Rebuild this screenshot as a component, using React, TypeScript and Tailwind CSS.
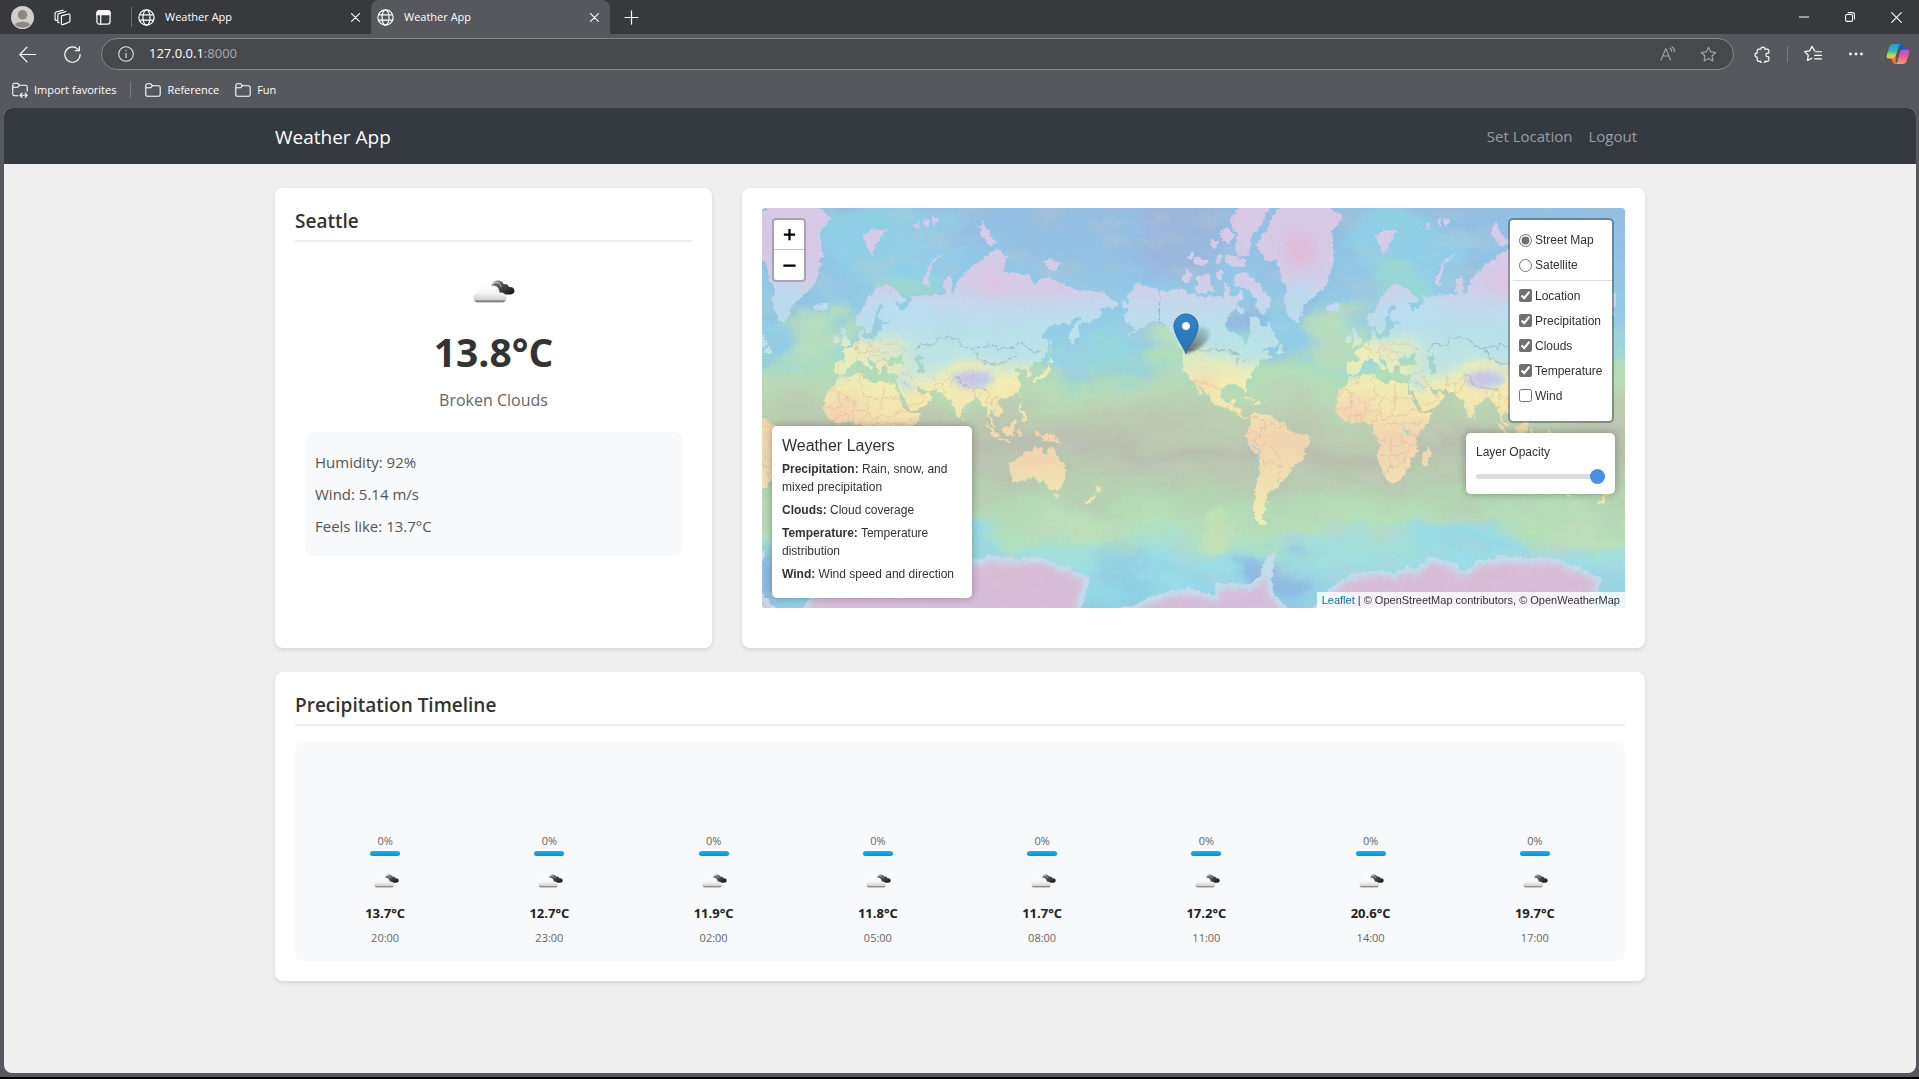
import React, { useState } from "react";

/* ---------- map geometry ---------- */

const WORLD = 512;
const TOP = 34;

function project(lon: number, lat: number) {
  const x = ((lon + 180) / 360) * WORLD;
  const r = (lat * Math.PI) / 180;
  const y = WORLD / 2 - (WORLD / (2 * Math.PI)) * Math.log(Math.tan(Math.PI / 4 + r / 2)) - TOP;
  return `${x.toFixed(1)} ${y.toFixed(1)}`;
}

function toPath(coords: string, close = true) {
  const n = coords.trim().split(/\s+/).map(Number);
  const pts: string[] = [];
  for (let i = 0; i < n.length; i += 2) pts.push(project(n[i], n[i + 1]));
  return "M" + pts.join("L") + (close ? "Z" : "");
}

const ANTARCTICA = toPath(
  "-180 -79 -180 -77.5 -160 -76.8 -148 -75.5 -135 -74.3 -120 -73.7 -112 -74.3 -102 -75 -101 -72.5 -90 -72.8 -78 -73 -70 -71 -67 -67.5 -58 -63.5 -60 -66 -62 -71 -61 -74.5 -50 -77.5 -35 -78 -26 -75 -16 -72.5 -8 -71 5 -70 15 -69.7 24 -70.3 33 -68.8 39 -69.7 45 -67.6 51 -66 57 -67 62 -67.5 68 -68 71 -70 76 -69.5 82 -67.3 88 -66.7 94 -66.9 100 -65.5 107 -66.6 112 -66 119 -67 125 -66.2 131 -66.2 137 -66.7 142 -67 148 -68.5 154 -68.8 160 -70 165 -70.7 170 -71.5 168 -74 163 -77.5 180 -79 180 -82 -180 -82"
);

const COASTS = [
  // North and Central America
  "-168 66 -162 66.5 -164 68 -157 71.3 -150 70.5 -141 69.7 -135 69 -128 70 -124 69.5 -115 68.2 -108 68 -102 67.8 -96 68 -95 71.5 -92 70.5 -91 68.5 -86 68 -85 69.5 -82 69.5 -82 67 -86 66.3 -90 64 -94 61 -94.5 58.8 -92.5 57 -85 55.3 -82.3 55 -82 53 -80 51.2 -79 52 -79 54.5 -76.5 56.5 -78 59 -77.5 62.3 -73.5 62.3 -70 61 -69.5 59 -67 58.5 -64.5 60.3 -62 57.5 -60 55 -56 52.5 -60 50.2 -66 50 -70 47 -65 48.8 -65 46.5 -61 46 -64 44.5 -66 44.5 -70 43.6 -70.6 41.7 -74 40.6 -76 37 -76 35 -81 31.5 -80.2 27 -80.6 25.2 -82.7 28 -84 30 -89.5 30.2 -94 29.5 -97.3 27.5 -97.7 22.5 -95.5 18.8 -91.5 18.6 -90.3 21 -87 21.4 -88.3 17.5 -88.5 15.9 -83.4 15 -83.7 11 -81.5 9 -77.5 8.6 -79.5 7.5 -83 8.3 -85.7 10 -87.5 13 -92 14.3 -95 16 -101.5 17.6 -105.5 20.3 -106 23 -109.5 26.5 -112.5 29.8 -114.7 31.6 -112.5 27.5 -110 23.2 -112 24.8 -115 28.5 -117.2 32.6 -120.6 34.6 -124 39 -124.3 43 -124.5 48 -127.5 51 -131 54.8 -135 58.5 -140 59.8 -146 60.8 -151 59.3 -154 58 -160 55.7 -164 54.7 -158 58 -162 58.8 -165.5 61 -164.5 63.3 -161.5 64.4 -166 64.5",
  // Newfoundland
  "-59 47.7 -56 51.5 -53 47",
  // Arctic islands
  "-117 72.5 -112 73 -106 73.3 -105 71 -103 69.5 -108 68.8 -115 69 -117 70.5 -113 71.3",
  "-125 72.5 -122 74.3 -118 73 -120 71.2 -124 71.3",
  "-80 73.7 -74 71.7 -68 70 -62 67 -64 65 -68 62.5 -73 64.3 -72.5 67.3 -79 70 -88 70.5 -89 73",
  "-92 81.3 -85 82.4 -75 83 -64 82.7 -68 81 -76 79.5 -78 76.6 -86 76.4 -88 78 -86 80 -90 80.4",
  "-95 76.5 -90 76.6 -81 75.8 -80 74.6 -90 74.7 -95 75.6",
  "-117 76.4 -110 76 -106 75.8 -109 75 -116 75",
  "-101 73.8 -97 73.8 -97 71.8 -101 72.5",
  "-98 79.8 -94 80.5 -88 79.5 -92 78.4 -97 78.8",
  "-105 79 -100 78.8 -101 77.8 -105 78",
  "-100 76.6 -97 76.5 -98 75.2 -103 75.5",
  "-87 65.7 -81 64 -83 62.7 -87 63.8",
  "-122 76 -118 77.3 -116 77 -119 75.7",
  // Greenland
  "-73 78.3 -67 76 -58 75.6 -55 72 -51 69.5 -53.5 67 -52 64 -48.5 61 -44 59.9 -42 62 -39.5 65.5 -32 68 -24 70.5 -20 74 -18 77 -20 80 -12 81.5 -22 82.7 -35 84 -55 83 -64 81 -66 80",
  // Europe and Asia
  "-9 43.3 -1.8 43.4 -1.2 46 -4.6 48.4 1.5 50.2 4.5 52.5 8 53.8 8.2 57 10.5 57.5 10 54.5 14 54 19 54.4 21.5 57.3 24 57.5 24 59.3 30 59.9 25 60.4 21.5 60.8 21.5 63.2 25.3 65 22 65.7 17.5 61 18.5 59.8 16 56.5 13 55.5 11 59 8 58.2 5.2 60 5.3 62 10 64 14 67.5 20 70 26 71 31 70.3 41 67.4 40 66.2 33 66.5 37 64 40 64.7 44 66 44 68.5 47 67.8 54 68.5 60 68.5 68 68.5 67 72 72 73 74 68 78 72 87 74.8 95 76 104 77.7 112 76.5 108 73.5 114 73.6 127 73 131 71 140 72.5 152 71 161 69.6 170 69.5 180 69 180 65 177.5 64.5 179 62.5 170 60 164 60 162.5 57.5 162.8 55.5 159.5 53 156.8 51 155.7 56 159 59 164 62.3 160 61.5 155 59.5 148 59.5 142 59 135.5 54.7 141 53 140.5 48.5 135.5 44 131.5 43 128 40 129.3 36.5 126.5 34.5 126 37.5 124.7 39.6 121.5 39 121 40.7 117.8 39 119 37.3 122.3 37 119.5 35 121.8 31 121 28 117 23.8 111 21.4 108 21.7 106 19 109 13.5 107 10.4 105 8.7 104.8 10.4 100.8 13.4 99.3 10 103.4 3.5 103.5 1.4 100.4 5.5 98.3 9 97.5 16.5 94.4 16 91.8 22.3 88 21.6 82.3 16.8 80.2 15 79.8 10.4 77.5 8.1 74.8 13 72.8 19.5 72.5 21 69 22.3 66.5 25.3 57 27 51.3 28 48 30 50.5 26 51.5 24.5 54 24.2 56.3 26.2 59.8 22.5 55 17.2 45 12.8 43 14 42.5 17 39 21.5 35 28 34.6 29.5 34.3 31.3 36 36.2 28 36.7 26.5 40 29 41.2 35 42 41 41.2 38 44.5 39 47.2 35 46.3 33.5 44.5 31 46.6 28 43.5 28 41.3 23.5 40.5 24 38 22.5 36.5 19.5 40 19.6 42 13.5 45.6 13.8 43 18.4 40 16 38 13.5 41 10.3 43.5 8.8 44.4 3.2 43.2 -0.2 39 -2 36.8 -5.6 36 -9 37 -9.4 39",
  // Chukotka across the antimeridian
  "-180 69 -175 67.3 -170 66.2 -173 64.3 -180 65",
  // Africa
  "-6 35.8 -1.5 35.2 10 37.3 10.8 34 15.2 32.3 20 31 22 33 29 31 32.5 31.2 34 27.5 37.3 21 39.5 15.5 43.2 11.7 51.2 12 47.8 4.5 41.5 -1.8 39 -6.5 40.7 -15 35 -20 35.5 -24 32.7 -26.5 30 -31.5 25.5 -34 20 -34.8 18.2 -32 15 -27 14.3 -22 11.8 -17 13.7 -11 12 -5.5 8.8 -1 9.6 4 6 4.3 2 6.3 -4 5.2 -7.7 4.4 -13 8 -16.8 12.5 -17.3 15 -16.2 19 -17 21.2 -13 27.5 -9.7 30",
  "49.3 -12 50.3 -16 47 -25 44 -25 43.5 -21.5 44.5 -16.3",
  // South America
  "-77.3 8.5 -74.8 11 -71.5 12.3 -68 10.6 -62 10.6 -57 6 -51.7 4 -50 0 -44 -2.6 -39 -3 -35.3 -5.5 -35 -9 -39 -13.5 -39.3 -18 -41 -22 -45 -23.5 -48.6 -26 -48.7 -28.5 -53.5 -33.8 -57 -35 -57 -38 -62 -39 -65 -41 -65.4 -45 -67.5 -46.5 -65.8 -48 -69 -51 -68.3 -53 -65.2 -54.7 -69 -55.4 -73 -53 -75.5 -49 -73.5 -42 -73.5 -37 -71.5 -32 -70.3 -24 -70.3 -18.3 -76.2 -14 -79 -8 -81.3 -5 -80 -2.5 -79.5 1 -77.3 4",
  // Australia and Tasmania
  "114 -22 117 -20.7 122 -18 126 -14 129.5 -15 131 -12 136.8 -12.2 135.5 -15 140 -17.6 142 -11 145.4 -15 149 -20.3 153 -25.5 153 -31 150 -37.3 146.3 -39 140.5 -38 138 -34.5 137.5 -33 135.5 -34.8 131 -31.5 126 -32.3 120 -34 115.2 -34.3 115.7 -31.5 113.5 -26",
  "144.8 -40.8 148.2 -41 147 -43.5",
  // New Zealand
  "172.8 -34.6 175.5 -37 178.4 -37.8 175.3 -41.5 174.8 -39.5 174.8 -37.5",
  "172.8 -40.6 174 -41.8 170.5 -46 168 -46.6 167 -45.5",
  // New Guinea, Borneo, Sumatra, Java, Sulawesi, Philippines
  "131 -0.8 134 -0.9 135 -3.3 141 -2.6 147 -6 150.5 -10.5 144 -7.8 138 -8.3 138 -5.5 133 -4",
  "109 1.5 113 3 117 7 119 5 117.5 1 116 -4 110.3 -3",
  "95.5 5.5 98.5 4 103.5 -1 106 -3.5 105.5 -5.8 102 -4 98.5 1.5",
  "105.5 -6.5 110 -6.6 115 -8.2 114 -8.8 106 -7.5",
  "119.5 0.5 124.5 1.2 121 .2 123 -4.5 121 -3 119.6 -5.5",
  "120.5 18.5 122.2 18.3 121.5 14 124 12.8 126 9 126 6.5 122 7.2 123 10 120.3 14.5",
  // Japan and Sakhalin
  "130 33.5 132.5 35.5 136.8 37.2 140 39.5 141 41.3 142 39.5 140.7 35.8 136.5 34 131 31.3",
  "140 41.7 141.8 45.4 145.3 43.4 143 42",
  "142 54 143.3 52.8 143 49 142.6 46.3 142 48.5",
  // Britain, Ireland, Iceland
  "-5.5 50 1.2 51.2 1.6 52.8 -1.5 55 -2 57.5 -4 58.6 -6 57 -3.2 54.8 -4.5 53 -4.8 51.7",
  "-10 52 -6.4 52.2 -6 54.6 -8 55.3 -10 54",
  "-24 65.5 -20.5 66 -15 66.2 -14 64.8 -18.8 63.4 -22.7 64",
  // Svalbard, Novaya Zemlya, Franz Josef, Severnaya Zemlya, New Siberian
  "11 79.6 18 80.2 27 80.2 21 78.8 17 76.6 13.5 78",
  "52 71 55 73.5 60 76 68.5 77 60 75.3 56 72 57.3 70.7",
  "45 80.7 50 81 49 80.2", "53 81.2 57 81.4 56 80.5", "59 81.6 64 81.4 60 80.6",
  "92 79.7 95 81.2 100 79.5 105 78.6 100 78",
  "137 75.5 142 76.2 150 75.2 143 73.5",
  // Cuba, Hispaniola, Sri Lanka, Taiwan
  "-84.8 22 -81 23.1 -74.3 20.2 -77.5 19.9 -82 22.3",
  "-74.3 18.5 -71.8 19.8 -68.5 18.6 -71.5 17.8",
  "79.8 8 80.3 9.7 81.8 7 80.3 6",
  "120.2 23 121.6 25.2 120.9 22",
].map((c) => toPath(c)).join("") + ANTARCTICA;

const LAKES = [
  "47 45.5 51 47 53 45 51 43 53.5 41 54 37 50 37 49 40.5",
  "-92 46.7 -88 48.8 -84.5 46.7 -88 46.5",
  "-87.7 42 -86.3 42 -85.5 45.8 -87.5 45",
  "-83.5 43.5 -80 45.5 -81.5 43.3",
  "-83 41.8 -79 42.8 -81 42.5",
  "31.7 -1 34 0 34 -2 32 -2.6",
].map((c) => toPath(c)).join("");

const DARK_BORDERS = [
  "-141 69.7 -141 60.3 -136 59",
  "-123 49 -95 49 -89 48 -83 46",
  "47 48.5 51 51.5 61 51 62 54 71 54.3 77 53.7 80 51 87 49.2 92 50.6 98 50 98 52 103 50.5 108 49.5 115 50 117 49.7 120 53 127 50 131 47.7 135 48.4",
  "87 49.2 90 47.5 91 45 97 42.7 105 41.7 111 43.5 119 46.7",
  "73 36.8 78 34 79 31 81 30 88 28 92 27.8 97 28",
].map((c) => toPath(c, false)).join("");

const RED_BORDERS = [
  "-13 27.6 -8.7 27.3 -8.7 26 -4.8 25 3.2 19 5.8 19.5 12 23.5 15 23 24 19.5 24 22 25 22 25 31.5",
  "25 22 37 22", "24 19.5 24 15.5 22 13 23 10 27 9.5 33 10 34 12 36.5 14.5 43 12.5", "-8.7 27.3 -13 26 -17 21.3",
  "9.5 37 8 33.5 9.8 30 9.5 26.5 12 23.5", "-1.7 35 -1 32 -8.7 28.7 -8.7 27.3", "-12 15 -5.5 15.5 -6.5 25",
  "-12 15 -16.5 16.3", "4 13.5 4.2 16.5 3.2 19", "4 13.5 13 13.7 14 16 15 23", "2.7 6.3 3.5 11.7 4 13.5", "8.5 4.8 14 12 13.5 13.7",
  "-3 5 -2.8 11 0 11 1 6", "-8 4.5 -8 10 -5 10 -3 10", "14.5 13 15.5 8 18 8 23 10", "16 2 18.5 4.5 27.5 5 30 4 35 5 42 4 45 8 48 8",
  "30 4 31 1 29.5 -1 29 -4.5 30.5 -8 28 -9 28.5 -12 24 -11 22 -11 22 -7 17 -8 12 -6", "34 1 34 -1 39 -5", "30.5 -8 34 -10 40 -10.7",
  "22 -11 22 -16 23.5 -18 12 -17.2", "25 -18 30 -15.7 34.5 -14.5 34.5 -10", "21 -18 21 -22 20 -28.5 17 -28.8", "20 -25 25 -25.7 29 -22 32 -22 33 -16", "25 -18 29 -22", "32 -22 32 -27",
  "-117 32.5 -111 31.3 -106.5 31.7 -103 29 -99.5 27.5 -97.3 26", "-92 14.6 -91 17.8 -89 17.8", "-88 15.7 -90 13.8", "-83.6 11 -86 11.2", "-86 15 -83.5 15",
  "-67 6 -67 1.2 -70 2 -70 -4.2 -74 -7.5 -73 -9.5 -70.5 -11 -65 -10 -60 -14 -58 -17 -58 -20 -54.5 -22.5 -54 -25.5 -56 -28 -57.6 -30.2 -53.5 -33.7",
  "-77.5 8 -72.5 9 -72 7 -67 6", "-79 1.3 -75.2 -.2 -70 -4.2", "-60.7 5.2 -64 4 -67 1.2", "-60 8.3 -60 2 -56.5 2 -51.8 4", "-80.3 -3.4 -75.5 -1.5", "-57 6 -56.5 2",
  "-69.5 -17.5 -70.5 -11", "-58 -20 -62.5 -22 -67 -22.8 -69.5 -17.5", "-62.5 -22 -57.6 -25.3 -54.5 -25.6", "-57.6 -30.2 -58.2 -34",
  "35.5 33 39 32 44.8 29.3 48 29.5", "36 36.5 42.3 37.2 44.8 39.7", "42.3 37.2 46 33 48 30.5", "43 17.3 52 19 55 22.5 51.5 24.2", "61 36.5 61 31 61.5 25.2", "61 31 66.5 30 71 34 74 37", "66.5 30 68 24", "74 34 71 28 69 24.5", "88 27 89.5 22", "92.5 22 94 26 97 28 98.5 24 101 21.5 106 22.8 108 21.6", "98.5 24 97.5 19 98.5 15", "101 21 101 18 105 16 103 14.3 102.7 12", "102 22 105 19 107.5 15",
  "24 38 26.5 41.5 28 42", "2.5 51 6 49.5 8 49 7.5 47.5 6 46 7.5 43.7", "6.5 53 6 51 6 49.5", "14.3 54 14.8 51 18.5 49.8 22.5 49", "7.5 47.5 13 47.6 13 49 14.8 51", "13.5 46 16.5 46.5 19 46 22 48 26.5 48 30 46", "13 47.6 17 48.5 22 48.4", "24 54 23.5 51.5 31 51.5 34 52 40 49.5 38.3 47.2", "19 42 20.5 44 22.5 44.5 28.5 44", "-7 42 -6.8 41 -7.3 37.5", "141 -2.6 141 -9",
].map((c) => toPath(c, false)).join("");

function WorldMap() {
  const offsets = [-682, -170, 342];
  return (
    <svg className="absolute inset-0 h-full w-full" viewBox="0 0 863 400" preserveAspectRatio="xMidYMid slice" aria-hidden="true">
      <defs>
        <linearGradient id="sea" x1="0" y1="-40" x2="0" y2="440" gradientUnits="userSpaceOnUse">
          <stop offset="0" stopColor="#93bde3" />
          <stop offset=".18" stopColor="#93c3e5" />
          <stop offset=".32" stopColor="#94cee6" />
          <stop offset=".38" stopColor="#9dd8dd" />
          <stop offset=".42" stopColor="#b0deba" />
          <stop offset=".47" stopColor="#b8dab5" />
          <stop offset=".53" stopColor="#bcccb0" />
          <stop offset=".59" stopColor="#b9bfae" />
          <stop offset=".64" stopColor="#b8c9af" />
          <stop offset=".69" stopColor="#b4d8b3" />
          <stop offset=".75" stopColor="#b5e0b8" />
          <stop offset=".79" stopColor="#a5dfd6" />
          <stop offset=".84" stopColor="#9bdde8" />
          <stop offset=".91" stopColor="#93d4e6" />
          <stop offset="1" stopColor="#8cc4e3" />
        </linearGradient>
        <linearGradient id="soil" x1="0" y1="0" x2="0" y2="400" gradientUnits="userSpaceOnUse">
          <stop offset="0" stopColor="#d8c8e6" />
          <stop offset=".19" stopColor="#d2cee9" />
          <stop offset=".25" stopColor="#c2daee" />
          <stop offset=".3" stopColor="#b8e1eb" />
          <stop offset=".35" stopColor="#bce3e6" />
          <stop offset=".39" stopColor="#e5edbd" />
          <stop offset=".44" stopColor="#f2edb4" />
          <stop offset=".52" stopColor="#f3e4b0" />
          <stop offset=".57" stopColor="#f1d4b0" />
          <stop offset=".63" stopColor="#f1dab0" />
          <stop offset=".7" stopColor="#f1e2b0" />
          <stop offset=".8" stopColor="#eeeeb4" />
          <stop offset=".86" stopColor="#d8bfdb" />
          <stop offset=".92" stopColor="#dabcd7" />
          <stop offset="1" stopColor="#d7bdda" />
        </linearGradient>
        <clipPath id="coast">
          <path d={COASTS} />
        </clipPath>
        <filter id="soft" x="-50%" y="-50%" width="200%" height="200%">
          <feGaussianBlur stdDeviation="7" />
        </filter>
        <filter id="smear" x="-50%" y="-50%" width="200%" height="200%">
          <feGaussianBlur stdDeviation="3" />
        </filter>
        <filter id="swirl" filterUnits="userSpaceOnUse" x="-40" y="-40" width="943" height="480">
          <feTurbulence type="fractalNoise" baseFrequency=".011 .02" numOctaves="6" seed="8" result="n" />
          <feDisplacementMap in="SourceGraphic" in2="n" scale="72" xChannelSelector="R" yChannelSelector="G" />
        </filter>
        <filter id="rough" filterUnits="userSpaceOnUse" x="-10" y="-10" width="883" height="420">
          <feTurbulence type="fractalNoise" baseFrequency=".2" numOctaves="3" seed="3" result="n" />
          <feDisplacementMap in="SourceGraphic" in2="n" scale="6" xChannelSelector="R" yChannelSelector="G" />
        </filter>
        <filter id="cloud" filterUnits="userSpaceOnUse" x="0" y="0" width="863" height="400">
          <feTurbulence type="fractalNoise" baseFrequency=".022 .045" numOctaves="7" seed="21" />
          <feColorMatrix values="0 0 0 0 .6  0 0 0 0 .6  0 0 0 0 .6  1.9 0 0 0 -.9" />
        </filter>
        <g id="sea-patches" filter="url(#soft)">
          <ellipse cx="70" cy="18" rx="52" ry="46" fill="#9db2dc" opacity=".7" />
          <ellipse cx="200" cy="60" rx="16" ry="60" fill="#8bbde4" opacity=".7" />
          <ellipse cx="290" cy="35" rx="60" ry="38" fill="#8fd0e6" opacity=".9" />
          <ellipse cx="305" cy="75" rx="30" ry="18" fill="#9adbd0" opacity=".8" />
          <ellipse cx="350" cy="40" rx="22" ry="40" fill="#93cde7" opacity=".8" />
          <ellipse cx="224" cy="130" rx="28" ry="22" fill="#b5debb" />
          <ellipse cx="250" cy="114" rx="26" ry="8" fill="#b9dfb6" />
          <ellipse cx="180" cy="140" rx="22" ry="16" fill="#91cbe6" />
          <ellipse cx="83" cy="138" rx="28" ry="20" fill="#b5dfbc" />
          <ellipse cx="6" cy="138" rx="18" ry="20" fill="#93d6da" />
          <ellipse cx="475" cy="150" rx="22" ry="14" fill="#93d3e4" />
          <ellipse cx="40" cy="140" rx="20" ry="18" fill="#92cfe6" />
          <ellipse cx="135" cy="118" rx="22" ry="20" fill="#8cbbe2" />
          <ellipse cx="172" cy="372" rx="32" ry="26" fill="#8cbbe3" />
          <ellipse cx="115" cy="322" rx="24" ry="18" fill="#c2e2b5" />
          <ellipse cx="20" cy="370" rx="10" ry="38" fill="#8bcfe2" />
          <ellipse cx="490" cy="315" rx="40" ry="14" fill="#bde0b9" />
          <ellipse cx="360" cy="335" rx="60" ry="20" fill="#98dae6" />
        </g>
        <g id="world">
          <g clipPath="url(#coast)">
            <rect x="0" y="-10" width="512" height="430" fill="url(#soil)" />
            <g filter="url(#soft)">
              <ellipse cx="196" cy="42" rx="16" ry="18" fill="#e2b8d3" opacity=".8" />
              <ellipse cx="195" cy="93" rx="16" ry="18" fill="#b9dbf0" />
              <ellipse cx="402" cy="76" rx="20" ry="14" fill="#dfc1df" opacity=".7" />
              <ellipse cx="455" cy="80" rx="34" ry="9" fill="#dbc6e4" opacity=".7" />
              <ellipse cx="310" cy="105" rx="30" ry="14" fill="#b8dff0" />
              <ellipse cx="262" cy="144" rx="30" ry="12" fill="#f0ecb8" />
              <ellipse cx="300" cy="138" rx="16" ry="7" fill="#eaedbc" />
              <ellipse cx="345" cy="148" rx="28" ry="11" fill="#b9e4e6" />
              <ellipse cx="415" cy="146" rx="45" ry="12" fill="#b9e2ea" />
              <ellipse cx="325" cy="162" rx="22" ry="8" fill="#c4e4de" />
              <ellipse cx="150" cy="146" rx="22" ry="9" fill="#b9e3e8" />
              <ellipse cx="90" cy="148" rx="14" ry="9" fill="#e2ecb8" />
              <ellipse cx="100" cy="176" rx="12" ry="8" fill="#f4d6b0" />
              <ellipse cx="250" cy="195" rx="22" ry="5" fill="#f3d2b3" transform="rotate(-30 250 195)" />
              <ellipse cx="250" cy="207" rx="26" ry="5" fill="#f3ccae" />
              <ellipse cx="447" cy="250" rx="20" ry="10" fill="#f4d3ae" />
            </g>
            <g filter="url(#smear)">
              <ellipse cx="381" cy="171" rx="20" ry="9" fill="#c0cbea" />
              <ellipse cx="376" cy="171" rx="8" ry="4" fill="#d3bfe2" />
              <ellipse cx="376" cy="158" rx="18" ry="4" fill="#eeecb4" />
              <ellipse cx="312" cy="176" rx="12" ry="4" fill="#b9e1ea" transform="rotate(35 312 176)" />
              <ellipse cx="243" cy="171" rx="12" ry="3" fill="#c6e4e0" transform="rotate(-18 243 171)" />
              <path d={ANTARCTICA} fill="none" stroke="#bfe0f0" strokeWidth="10" />
            </g>
            <path d={LAKES} fill="#a6d6cc" />
          </g>
          <path d={RED_BORDERS} fill="none" stroke="#cf958a" strokeWidth=".6" opacity=".5" />
          <path d={DARK_BORDERS} fill="none" stroke="#7d86a4" strokeWidth=".7" opacity=".6" />
          <path d="M148 237 Q157 243 155 252 Q150 262 151 278" fill="none" stroke="#9fcfe6" strokeWidth="1.200" />
        </g>
      </defs>
      <g filter="url(#swirl)">
        <rect x="-60" y="-60" width="983" height="520" fill="url(#sea)" />
        {offsets.map((x) => (
          <use key={x} href="#sea-patches" x={x} />
        ))}
      </g>
      <rect width="863" height="400" filter="url(#cloud)" opacity=".34" />
      <g filter="url(#rough)">
        {offsets.map((x) => (
          <use key={x} href="#world" x={x} />
        ))}
      </g>
      <rect width="863" height="400" filter="url(#cloud)" opacity=".1" />
    </svg>
  );
}

function Marker() {
  return (
    <svg className="absolute top-[105px] left-[49%] h-[42px] w-[50px] -translate-x-3" viewBox="0 0 50 42" role="img" aria-label="Seattle marker">
      <defs>
        <linearGradient id="pin" x1="0" y1="0" x2="0" y2="1">
          <stop offset="0" stopColor="#2e86cc" />
          <stop offset="1" stopColor="#2f6faf" />
        </linearGradient>
        <linearGradient id="pin-shade" x1="13" y1="41" x2="34" y2="16" gradientUnits="userSpaceOnUse">
          <stop offset="0" stopColor="#000" stopOpacity=".6" />
          <stop offset="1" stopColor="#000" stopOpacity=".08" />
        </linearGradient>
        <filter id="pin-shadow" x="-30%" y="-30%" width="160%" height="160%">
          <feGaussianBlur stdDeviation="1.500" />
        </filter>
      </defs>
      <path d="M13 41 L20 20 Q30 10 36 17 Q38 26 28 34 Z" fill="url(#pin-shade)" filter="url(#pin-shadow)" />
      <path d="M13 40.500C10.500 34 .9 22 .9 13A12.100 12.100 0 0 1 25.100 13C25.100 22 15.500 34 13 40.500Z" fill="url(#pin)" stroke="#2c6ca8" strokeWidth="1" />
      <circle cx="13" cy="13" r="4.300" fill="#fff" stroke="#2c6ca8" strokeWidth=".6" />
    </svg>
  );
}

/* ---------- icons ---------- */

function CloudIcon({ className }: { className: string }) {
  return (
    <svg className={className} viewBox="0 0 42 23" aria-hidden="true">
      <defs>
        <linearGradient id="cl-light" x1="0" y1="0" x2="0" y2="1">
          <stop offset="0" stopColor="#ffffff" />
          <stop offset=".5" stopColor="#f4f4f4" />
          <stop offset=".84" stopColor="#d2d2d2" />
          <stop offset=".93" stopColor="#777777" />
          <stop offset="1" stopColor="#9a9a9a" />
        </linearGradient>
        <linearGradient id="cl-dark" x1="0" y1="0" x2="1" y2="1">
          <stop offset="0" stopColor="#9a9a9a" />
          <stop offset=".4" stopColor="#505050" />
          <stop offset="1" stopColor="#111111" />
        </linearGradient>
      </defs>
      <path d="M18 9C18 4 21 .5 25 .5C28 .5 29.500 2 30.500 4C33 3.500 35.500 4.500 36 7C39 6.500 41.500 8 41.500 10.800C41.500 13.500 39.500 14.500 37 14.500L24 14.500Z" fill="url(#cl-dark)" />
      <path d="M5 22.500C2 22.500 .5 20 .5 17.500C.5 14 3 12.500 5.500 12C6 6.500 9 4 12.500 4C15 4 17 5 18 6.500C22 4.500 26.500 7.500 26.500 12.500C30 12 33.500 14 33.500 17.800C33.500 21 31.500 22.500 29 22.500Z" fill="url(#cl-light)" />
      <path d="M18.500 6C19.500 3 22 1.800 25 2.600C27 3.500 27.500 5 28 7" fill="none" stroke="#d8d8d8" strokeWidth=".9" />
    </svg>
  );
}

type IconProps = { children: React.ReactNode; className?: string; width?: number };
function Icon({ children, className = "h-4 w-4", width = 1.1 }: IconProps) {
  return (
    <svg className={className} viewBox="0 0 16 16" fill="none" stroke="currentColor" strokeWidth={width} strokeLinecap="round" strokeLinejoin="round" aria-hidden="true">
      {children}
    </svg>
  );
}

const Globe = () => (
  <Icon className="h-[17px] w-[17px] shrink-0">
    <circle cx="8" cy="8" r="7.200" />
    <ellipse cx="8" cy="8" rx="3.300" ry="7.200" />
    <path d="M1.500 5.500h13M1.500 10.500h13" />
  </Icon>
);
const Cross = () => (
  <Icon className="h-[9px] w-[9px]" width={2}>
    <path d="M1 1l14 14M15 1L1 15" />
  </Icon>
);
const Folder = () => (
  <Icon>
    <path d="M.8 12.500v-9A1.800 1.800 0 0 1 2.600 1.800h3.200L7.500 3.800h5.900a1.800 1.800 0 0 1 1.800 1.800v6.900a1.800 1.800 0 0 1-1.800 1.800H2.600A1.800 1.800 0 0 1 .8 12.500zM.9 5.800h4.600l2-2" />
  </Icon>
);
const ImportFolder = () => (
  <Icon>
    <path d="M6 13.800H2.600A1.800 1.800 0 0 1 .8 12V3A1.800 1.800 0 0 1 2.600 1.300h3.200L7.500 3.300h5.900a1.800 1.800 0 0 1 1.800 1.800V9M.9 5.300h4.600l2-2M8 13.300h7M10 11.200l-2 2.100 2 2.100M13.200 11.200l2 2.100-2 2.100" />
  </Icon>
);
const STAR = "M8 1.200l2.050 4.300 4.700.65-3.430 3.250.85 4.700L8 11.850 3.830 14.100l.85-4.700L1.250 6.150l4.700-.65z";

function Copilot() {
  return (
    <svg className="h-[22px] w-[24px]" viewBox="0 0 24 22" aria-hidden="true">
      <defs>
        <linearGradient id="cp1" x1="0" y1="0" x2="0" y2="1">
          <stop offset="0" stopColor="#1d9be8" />
          <stop offset=".45" stopColor="#2fb6b0" />
          <stop offset=".8" stopColor="#c8d63c" />
          <stop offset="1" stopColor="#f0c030" />
        </linearGradient>
        <linearGradient id="cp2" x1="0" y1="0" x2="0" y2="1">
          <stop offset="0" stopColor="#a552e8" />
          <stop offset=".5" stopColor="#ee5a9c" />
          <stop offset="1" stopColor="#ff9a58" />
        </linearGradient>
      </defs>
      <path d="M13 1h2.500c1.800 0 2.300 1.300 2.800 2.800L19 6.500h-5z" fill="#1658c4" />
      <path d="M5.500 15h5l-1 3.500c.5 1.500 1 2.500 2.500 2.500H9c-1.600 0-2.200-1.200-2.700-2.700z" fill="#f4693c" />
      <path d="M7.500 1H15c-1.500.3-2 1.500-2.500 3L9.800 13c-.5 1.700-1.300 2.600-3 2.600H3c-2.200 0-2.800-1.600-2.200-3.700l2.500-8C4 2 5.500 1 7.500 1z" fill="url(#cp1)" />
      <path d="M16.500 21H9c1.500-.3 2-1.500 2.500-3l2.700-9c.5-1.700 1.300-2.600 3-2.600H21c2.200 0 2.800 1.600 2.200 3.700l-2.500 8c-.7 1.900-2.200 2.900-4.200 2.900z" fill="url(#cp2)" />
    </svg>
  );
}

/* ---------- browser frame ---------- */

function Tab({ active }: { active?: boolean }) {
  return (
    <div className={`flex h-full w-[239px] items-center pr-[11px] pl-1.5 ${active ? "rounded-t-lg bg-[#57585d]" : ""}`}>
      <button className="flex min-w-0 flex-1 items-center gap-2.5 text-left text-[11px] text-white">
        <Globe />
        Weather App
      </button>
      <button aria-label="Close tab"><Cross /></button>
    </div>
  );
}

function BrowserChrome() {
  return (
    <header className="shrink-0 text-white">
      <div className="flex h-[34px] items-center bg-[#38393d]">
        <button aria-label="Profile" className="ml-[11px]">
          <svg className="h-[23px] w-[23px]" viewBox="0 0 23 23" aria-hidden="true">
            <circle cx="11.500" cy="11.500" r="11.500" fill="#d0cfcb" />
            <circle cx="11.500" cy="8.800" r="4.800" fill="#8d8a86" />
            <path d="M3.800 19C5 14.800 18 14.800 19.200 19A11.500 11.500 0 0 1 3.800 19Z" fill="#8d8a86" />
          </svg>
        </button>
        <button aria-label="Workspaces" className="ml-5">
          <Icon className="h-[17px] w-[17px]">
            <path d="M7 6.500l6.500-1.800c.8-.2 1.500.2 1.500 1v5.600c0 .6-.3 1-.9 1.200L8.300 14.700c-.8.300-1.300-.2-1.300-.9zM4.800 12.800c-.8.200-1.200-.2-1.200-.9V5.600c0-.6.300-1 .9-1.200l6.700-2M2.400 10.700c-.8.200-1.400-.2-1.400-.9V4c0-.6.300-1 .9-1.200L8.500 1" />
          </Icon>
        </button>
        <button aria-label="Tab actions" className="mr-5 ml-[25px]">
          <Icon className="h-[15px] w-[15px]" width={1.3}>
            <rect x="1" y="1" width="14" height="14" rx="2.500" />
            <path d="M1 3a2 2 0 0 1 2-2h10a2 2 0 0 1 2 2v2H1z" fill="currentColor" />
            <path d="M5 5v10" />
          </Icon>
        </button>
        <div className="h-5 w-px bg-[#6b6c70]" />
        <Tab />
        <Tab active />
        <button aria-label="New tab" className="ml-[14px]">
          <Icon className="h-[15px] w-[15px]" width={1.3}><path d="M8 1v14M1 8h14" /></Icon>
        </button>
        <div className="ml-auto flex h-full">
          <button aria-label="Minimize" className="flex w-[46px] items-center justify-center">
            <Icon className="h-2.5 w-2.5" width={1.8}><path d="M0 8h16" /></Icon>
          </button>
          <button aria-label="Restore" className="flex w-[46px] items-center justify-center">
            <Icon className="h-2.5 w-2.5" width={1.7}><rect x="1" y="4" width="11" height="11" rx="2" /><path d="M5 1h7a3 3 0 0 1 3 3v7" /></Icon>
          </button>
          <button aria-label="Close" className="flex w-[46px] items-center justify-center">
            <Icon className="h-[11px] w-[11px]" width={1.6}><path d="M1 1l14 14M15 1L1 15" /></Icon>
          </button>
        </div>
      </div>
      <div className="flex h-10 items-center bg-[#57585d]">
        <button aria-label="Back" className="ml-[19px]">
          <Icon className="h-[17px] w-[17px]"><path d="M15.500 8H1M7.500 1L.8 8l6.700 7" /></Icon>
        </button>
        <button aria-label="Reload" className="ml-7">
          <Icon className="h-[17px] w-[17px]"><path d="M15.200 8A7.200 7.200 0 1 1 12.600 2.500L14.500 4.300M14.500 .6v3.800h-3.800" /></Icon>
        </button>
        <div className="ml-5 flex h-8 flex-1 items-center rounded-full border border-[#85868a] bg-[#47484c] px-4">
          <Icon className="h-4 w-4 text-[#e4e4e5]"><circle cx="8" cy="8" r="7.300" /><path d="M8 7.200v4.300M8 4.600v.2" /></Icon>
          <button aria-label="Address" className="ml-[15px] flex-1 text-left text-[13px] text-white">
            127.0.0.1<span className="text-[#a9aaad]">:8000</span>
          </button>
          <button aria-label="Read aloud" className="text-[#a2a3a6]">
            <Icon><path d="M1 14L5.800 2.500 10.500 14M2.700 10h6.200M10 2.200c1.200.8 1.800 2 1.800 3.300M12 .8c1.700 1.300 2.700 3 2.700 5" /></Icon>
          </button>
          <button aria-label="Add to favorites" className="ml-6 text-[#a2a3a6]">
            <Icon className="h-[17px] w-[17px]"><path d={STAR} /></Icon>
          </button>
        </div>
        <button aria-label="Extensions" className="ml-5">
          <Icon className="h-[17px] w-[17px]">
            <path d="M5.300 3h1a2 2 0 0 1 4 0h2.200A1.500 1.500 0 0 1 14 4.500v2.200h-1a1.800 1.800 0 0 0 0 3.600h1v2.700a1.500 1.500 0 0 1-1.500 1.500h-2.200a2 2 0 0 1-4 0H4.500A1.500 1.500 0 0 1 3 13v-2.500a2 2 0 0 1 0-4V4.500A1.500 1.500 0 0 1 4.500 3z" />
          </Icon>
        </button>
        <div className="mx-4 h-4 w-px bg-[#7c7d81]" />
        <button aria-label="Favorites">
          <Icon className="h-[18px] w-[18px]"><path d="M9.500 5.200L7 1.200 5 5.300l-4.400.6 3.200 3.200-.7 4.600L7 11.800M10.500 6h5M9.500 9.200h6M9.500 12.400h6" /></Icon>
        </button>
        <button aria-label="Settings and more" className="ml-[26px]">
          <svg className="h-4 w-4" viewBox="0 0 16 16" fill="currentColor" aria-hidden="true"><circle cx="2.500" cy="8" r="1.400" /><circle cx="8" cy="8" r="1.400" /><circle cx="13.500" cy="8" r="1.400" /></svg>
        </button>
        <button aria-label="Copilot" className="mr-[9px] ml-[22px]"><Copilot /></button>
      </div>
      <nav className="flex h-[34px] items-center bg-[#57585d] pb-0.5 pl-3 text-[11px]">
        <a href="#import" className="flex items-center gap-1.5"><ImportFolder />Import favorites</a>
        <div className="mx-[14px] h-4 w-px bg-[#7c7d81]" />
        <a href="#reference" className="flex items-center gap-1.5"><Folder />Reference</a>
        <a href="#fun" className="ml-4 flex items-center gap-1.5"><Folder />Fun</a>
      </nav>
    </header>
  );
}

/* ---------- page ---------- */

const CARD = "rounded-lg bg-white p-5 shadow-[0_2px_4px_rgba(0,0,0,0.1)]";

function CardTitle({ children }: { children: React.ReactNode }) {
  return <h2 className="border-b-2 border-[#eeeeee] pt-px pb-[7px] text-[19px] leading-6 font-semibold text-[#333333]">{children}</h2>;
}

function CurrentWeather() {
  return (
    <section className={`${CARD} min-h-[460px]`}>
      <CardTitle>Seattle</CardTitle>
      <div className="flex flex-col items-center px-2.5 pt-[38px]">
        <CloudIcon className="h-[23px] w-[42px]" />
        <div className="mt-[19px] text-[39px] leading-[60px] font-bold text-[#333333]">13.8°C</div>
        <div className="mt-1 text-[16px] leading-7 text-[#666666]">Broken Clouds</div>
        <div className="mt-[18px] w-full rounded-lg bg-[#f8f9fa] px-2.5 py-[18px] text-[15px] leading-6 text-[#555555]">
          <p className="mb-2">Humidity: 92%</p>
          <p className="mb-2">Wind: 5.14 m/s</p>
          <p>Feels like: 13.7°C</p>
        </div>
      </div>
    </section>
  );
}

const LEGEND = [
  ["Precipitation:", "Rain, snow, and mixed precipitation"],
  ["Clouds:", "Cloud coverage"],
  ["Temperature:", "Temperature distribution"],
  ["Wind:", "Wind speed and direction"],
];

function LayersControl() {
  const [base, setBase] = useState("Street Map");
  const [on, setOn] = useState<Record<string, boolean>>({ Location: true, Precipitation: true, Clouds: true, Temperature: true, Wind: false });
  return (
    <fieldset className="absolute top-2.5 right-[11px] w-[106px] rounded-[5px] border-2 border-black/30 bg-white bg-clip-padding pt-2 pr-0 pb-3 pl-[3px] text-[12px] leading-[25px] text-[#333333]">
      {["Street Map", "Satellite"].map((name) => (
        <label key={name} className="flex items-center gap-[3px] pl-1.5">
          <input type="radio" name="base" checked={base === name} onChange={() => setBase(name)} className="mb-px h-[13px] w-[13px] accent-[#707070]" />
          {name}
        </label>
      ))}
      <div className="mt-0.5 mb-[3px] border-t border-[#dddddd]" />
      {Object.keys(on).map((name) => (
        <label key={name} className="flex items-center gap-[3px] pl-1.5">
          <input
            type="checkbox"
            checked={on[name]}
            onChange={() => setOn({ ...on, [name]: !on[name] })}
            className="mb-0.5 h-[13px] w-[13px] accent-[#707070]"
          />
          {name}
        </label>
      ))}
    </fieldset>
  );
}

function MapCard() {
  const [opacity, setOpacity] = useState(100);
  return (
    <section className={CARD}>
      <div className="relative h-[400px] overflow-hidden rounded bg-[#bcd8c4] font-['Liberation_Sans',Arial,sans-serif] text-[12px] text-[#333333]">
        <WorldMap />
        <Marker />
        <div className="absolute top-2.5 left-2.5 flex w-[34px] flex-col overflow-hidden rounded border-2 border-black/20 bg-white bg-clip-padding text-black">
          <button aria-label="Zoom in" className="flex h-[30px] items-center justify-center border-b border-[#cccccc]">
            <Icon className="h-[15px] w-[15px]" width={2.4}><path d="M8 2v12M2 8h12" strokeLinecap="butt" /></Icon>
          </button>
          <button aria-label="Zoom out" className="flex h-[30px] items-center justify-center">
            <Icon className="h-[15px] w-[15px]" width={2.4}><path d="M1.500 8h13" strokeLinecap="butt" /></Icon>
          </button>
        </div>
        <LayersControl />
        <div className="absolute top-[225px] right-2.5 w-[149px] rounded-[5px] bg-white p-2.5 shadow-[0_0_8px_rgba(0,0,0,0.3)]">
          <label htmlFor="opacity" className="block leading-[18px]">Layer Opacity</label>
          <input
            id="opacity"
            type="range"
            min={0}
            max={100}
            value={opacity}
            onChange={(e) => setOpacity(Number(e.target.value))}
            className="mt-[13px] mb-[5px] block h-[5px] w-full appearance-none rounded-[3px] bg-[#dddddd] [&::-webkit-slider-thumb]:h-[15px] [&::-webkit-slider-thumb]:w-[15px] [&::-webkit-slider-thumb]:appearance-none [&::-webkit-slider-thumb]:rounded-full [&::-webkit-slider-thumb]:bg-[#4a90e2]"
          />
        </div>
        <div className="absolute bottom-2.5 left-2.5 w-[200px] rounded-[5px] bg-white p-2.5 shadow-[0_0_8px_rgba(0,0,0,0.3)]">
          <h4 className="mb-[5px] text-[16px] leading-[19px]">Weather Layers</h4>
          {LEGEND.map(([name, text]) => (
            <p key={name} className="mb-[5px] leading-[18px]">
              <strong>{name}</strong> {text}
            </p>
          ))}
        </div>
        <div className="absolute right-0 bottom-0 bg-white/80 px-[5px] text-[11px] leading-4">
          <a href="#leaflet" className="text-[#0078a8]">Leaflet</a> | © OpenStreetMap contributors, © OpenWeatherMap
        </div>
      </div>
    </section>
  );
}

const FORECAST = [
  ["13.7°C", "20:00"],
  ["12.7°C", "23:00"],
  ["11.9°C", "02:00"],
  ["11.8°C", "05:00"],
  ["11.7°C", "08:00"],
  ["17.2°C", "11:00"],
  ["20.6°C", "14:00"],
  ["19.7°C", "17:00"],
];

function Timeline() {
  return (
    <section className={CARD}>
      <CardTitle>Precipitation Timeline</CardTitle>
      <div className="mt-4 grid h-[219px] grid-cols-8 items-end rounded-lg bg-[#f8f9fa] px-2 pb-[14px]">
        {FORECAST.map(([temp, time]) => (
          <div key={time} className="flex flex-col items-center">
            <span className="text-[11px] leading-[18px] text-[#666666]">0%</span>
            <div className="mt-px h-[5px] w-[30px] rounded-[3px] bg-linear-to-b from-[#12b5f7] to-[#0a8fdc]" />
            <CloudIcon className="mt-[18px] ml-0.5 h-[14px] w-[25px]" />
            <span className="mt-[15px] text-[13px] leading-5 font-bold text-[#222222]">{temp}</span>
            <span className="mt-1.5 text-[11px] leading-[18px] text-[#666666]">{time}</span>
          </div>
        ))}
      </div>
    </section>
  );
}

export default function App() {
  return (
    <div className="flex min-h-screen flex-col border-b-2 border-black bg-[#57585d] font-['Segoe_UI','Open_Sans','Noto_Sans',sans-serif]">
      <BrowserChrome />
      <div className="mr-[3px] mb-1 ml-1 flex flex-1 flex-col overflow-hidden rounded-lg bg-[#efefef]">
        <nav className="bg-[#343a40]">
          <div className="mx-auto flex h-14 max-w-[1400px] items-center px-[15px]">
            <a href="#home" className="pt-0.5 text-[19px] text-white">Weather App</a>
            <div className="ml-auto flex gap-4 pr-2 text-[15px] text-[#9a9da0]">
              <a href="#location">Set Location</a>
              <a href="#logout">Logout</a>
            </div>
          </div>
        </nav>
        <main className="mx-auto w-full max-w-[1400px] px-[15px] pt-6">
          <div className="grid grid-cols-[437fr_903fr] gap-[30px]">
            <CurrentWeather />
            <MapCard />
          </div>
          <div className="mt-6">
            <Timeline />
          </div>
        </main>
      </div>
    </div>
  );
}
